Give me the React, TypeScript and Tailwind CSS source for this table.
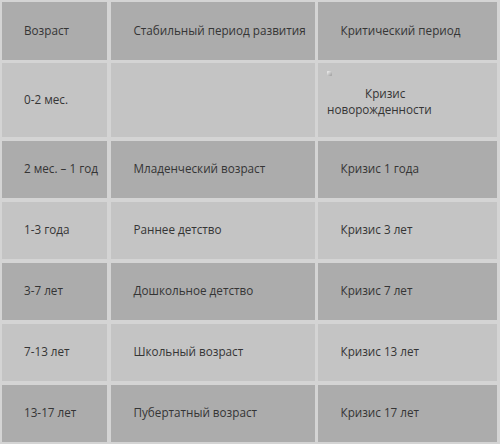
import React from "react";

const rows: { age: string; stable: string; crit: string }[] = [
  { age: "2 мес. – 1 год", stable: "Младенческий возраст", crit: "Кризис 1 года" },
  { age: "1-3 года", stable: "Раннее детство", crit: "Кризис 3 лет" },
  { age: "3-7 лет", stable: "Дошкольное детство", crit: "Кризис 7 лет" },
  { age: "7-13 лет", stable: "Школьный возраст", crit: "Кризис 13 лет" },
  { age: "13-17 лет", stable: "Пубертатный возраст", crit: "Кризис 17 лет" },
];

const dark = "bg-[#acacac]";
const light = "bg-[#c4c4c4]";

export default function App() {
  return (
    <div
      className="w-[500px] h-[444px] bg-[#d4d4d4] pt-[2px] pl-[2px] text-[11.7px] text-[#353535]"
      style={{ fontFamily: '"Open Sans", "Noto Sans", sans-serif' }}
    >
      <div className="grid grid-cols-[105px_204px_179px] grid-rows-[57.5px_74px_repeat(5,57.5px)] gap-x-[3.5px] gap-y-[3.5px]">
        {/* header */}
        <div className={`${dark} flex items-center pl-[22px]`}>Возраст</div>
        <div className={`${dark} flex items-center pl-[23px]`}>Стабильный период развития</div>
        <div className={`${dark} flex items-center pl-[22.5px]`}>Критический период</div>

        {/* first row */}
        <div className={`${light} flex items-center pl-[22px]`}>0-2 мес.</div>
        <div className={light}></div>
        <div className={`${light} pl-[9px] pt-[8px] leading-[16.4px]`}>
          <div className="w-[5px] h-[5px] bg-gradient-to-br from-[#f4f4f4] to-[#9a9a9a] rounded-[1px]"></div>
          <div className="mt-[9px] pl-[38px]">Кризис</div>
          <div>новорожденности</div>
        </div>

        {rows.map((r, i) => {
          const bg = i % 2 === 0 ? dark : light;
          return (
            <React.Fragment key={r.age}>
              <div className={`${bg} flex items-center pl-[22px]`}>{r.age}</div>
              <div className={`${bg} flex items-center pl-[23px]`}>{r.stable}</div>
              <div className={`${bg} flex items-center pl-[22.5px]`}>{r.crit}</div>
            </React.Fragment>
          );
        })}
      </div>
    </div>
  );
}
